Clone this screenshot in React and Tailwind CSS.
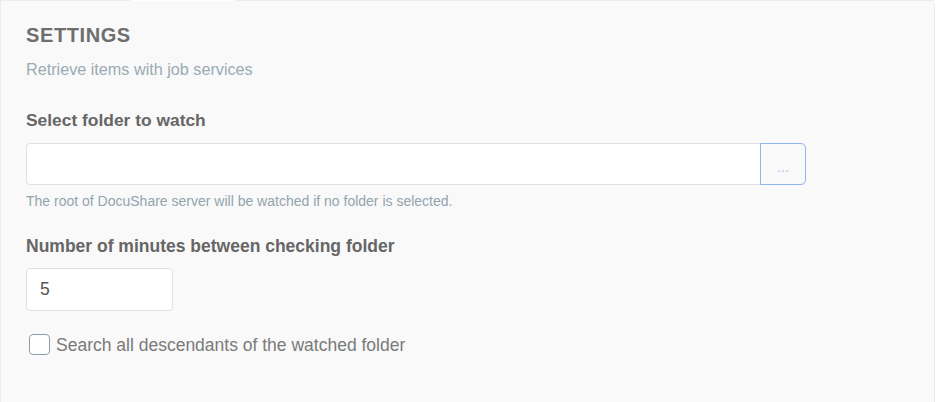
import React from 'react';

const App = () => {
  return (
    <div className="w-[936px] h-[402px] bg-white overflow-hidden font-['Liberation_Sans',Arial,sans-serif]">
      <div className="w-[935px] h-[420px] bg-[#f9f9f9] border-x border-b border-[#ececec] rounded-tr-[5px] flex flex-col">
        {/* Tab bridge along the top edge */}
        <div className="flex h-px">
          <div className="w-[130px] bg-[#ececec]" />
          <div className="w-[104px] bg-white" />
          <div className="flex-1 bg-[#ececec] rounded-tr-[5px]" />
        </div>

        <div className="pl-[25px] pt-[22px]">
          <h2 className="text-[20px] leading-[24px] font-bold text-[#6e6e6e] tracking-[0.6px]">SETTINGS</h2>
          <p className="mt-[12px] text-[16.2px] leading-[20px] text-[#9aabb4]">Retrieve items with job services</p>

          <label className="block mt-[31px] text-[17.4px] leading-[20px] font-bold text-[#666]">
            Select folder to watch
          </label>
          <div className="mt-[13px] flex w-[780px] h-[42px]">
            <input
              type="text"
              className="flex-1 min-w-0 bg-white border border-[#e0e0e0] rounded-l-[4px] outline-none px-[13px] text-[17px] text-[#555]"
            />
            <button className="w-[46px] -ml-px bg-[#f9f9f9] border border-[#8db6f0] rounded-r-[5px] text-[#a9c6ee] text-[14px] pt-[6px]">
              ...
            </button>
          </div>
          <p className="mt-[7px] text-[14px] leading-[18px] text-[#93a4ad]">
            The root of DocuShare server will be watched if no folder is selected.
          </p>

          <label className="block mt-[26px] text-[17.5px] leading-[20px] font-bold text-[#666]">
            Number of minutes between checking folder
          </label>
          <input
            type="text"
            defaultValue="5"
            className="block mt-[12px] w-[147px] h-[43px] bg-white border border-[#e0e0e0] rounded-[4px] outline-none pl-[13px] text-[17.5px] text-[#555]"
          />

          <label className="mt-[23px] ml-[3px] flex items-center gap-[6px] text-[17.5px] leading-[20px] text-[#7a7a7a]">
            <span className="w-[21px] h-[21px] bg-white border border-[#8d9ea9] rounded-[4px]" />
            Search all descendants of the watched folder
          </label>
        </div>
      </div>
    </div>
  );
};

export default App;
